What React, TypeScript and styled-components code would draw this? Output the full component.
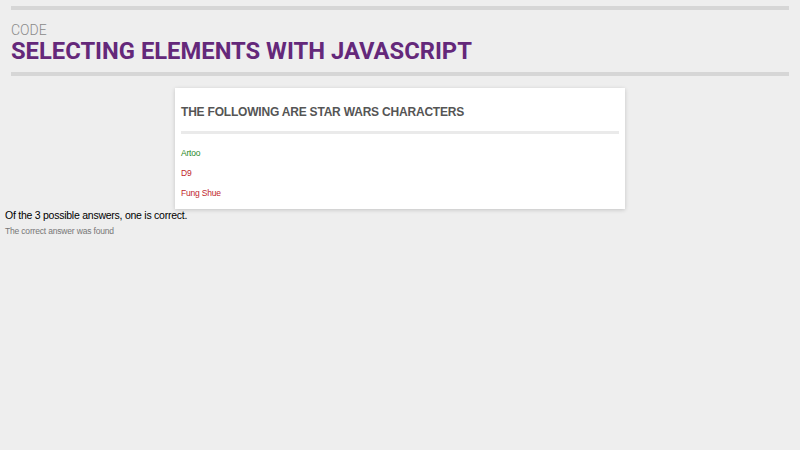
import styled, { createGlobalStyle } from 'styled-components';

const GlobalStyle = createGlobalStyle`
  html, body {
    margin: 0;
    padding: 0;
    background: #eeeeee;
  }
  body {
    font-family: "Liberation Sans", Arial, sans-serif;
  }
`;

const Header = styled.header`
  margin: 6px 11px 0;
  padding: 14px 0 7px;
  border-top: 4px solid #d6d6d6;
  border-bottom: 4px solid #d6d6d6;
  font-family: Roboto, "Liberation Sans", sans-serif;
`;

const Kicker = styled.div`
  font-size: 14px;
  font-weight: 300;
  line-height: 13px;
  color: #8a8a8a;
`;

const Title = styled.h1`
  margin: 0;
  font-size: 23.75px;
  font-weight: 700;
  line-height: 28px;
  color: #64287a;
`;

const Card = styled.section`
  width: 450px;
  margin: 12px auto 0;
  padding: 17px 6px 6px;
  box-sizing: border-box;
  background: #ffffff;
  box-shadow: 0 1px 4px rgba(0, 0, 0, 0.18);
`;

const CardTitle = styled.h2`
  margin: 0;
  padding-bottom: 12px;
  border-bottom: 3px solid #eaeaea;
  font-size: 12px;
  line-height: 14px;
  letter-spacing: -0.2px;
  font-weight: 700;
  color: #555555;
  text-transform: uppercase;
`;

const List = styled.ul`
  list-style: none;
  margin: 0;
  padding: 9px 0 0;
`;

const Item = styled.li<{ $correct: boolean }>`
  font-size: 8.5px;
  line-height: 20px;
  letter-spacing: -0.2px;
  color: ${({ $correct }) => ($correct ? '#2a8a2a' : '#c0262d')};
`;

const Summary = styled.p`
  margin: 0;
  padding: 0 5px;
  font-size: 10.5px;
  line-height: 12px;
  letter-spacing: -0.25px;
  color: #000000;
`;

const Note = styled.p`
  margin: 5px 0 0;
  padding: 0 5px;
  font-size: 8.5px;
  line-height: 10px;
  letter-spacing: -0.18px;
  color: #777777;
`;

const characters = [
  { name: 'Artoo', correct: true },
  { name: 'D9', correct: false },
  { name: 'Fung Shue', correct: false },
];

export default function App() {
  return (
    <>
      <GlobalStyle />
      <Header>
        <Kicker>CODE</Kicker>
        <Title>SELECTING ELEMENTS WITH JAVASCRIPT</Title>
      </Header>
      <Card>
        <CardTitle>The following are Star Wars characters</CardTitle>
        <List>
          {characters.map((c) => (
            <Item key={c.name} $correct={c.correct}>
              {c.name}
            </Item>
          ))}
        </List>
      </Card>
      <Summary>Of the 3 possible answers, one is correct.</Summary>
      <Note>The correct answer was found</Note>
    </>
  );
}
